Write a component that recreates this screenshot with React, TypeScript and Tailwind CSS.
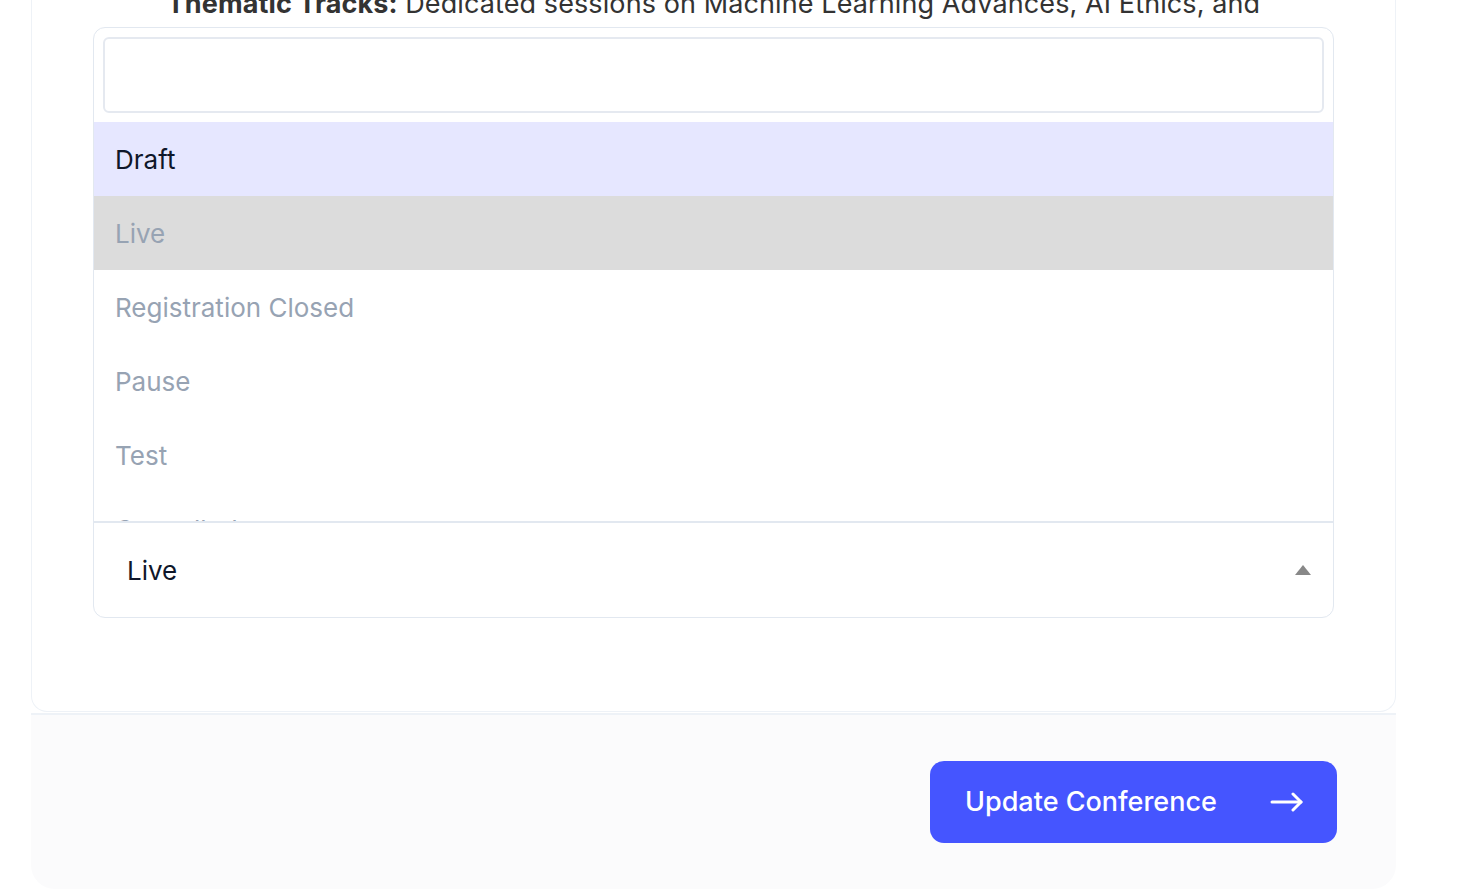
import React from 'react';

const OPTIONS = ['Draft', 'Live', 'Registration Closed', 'Pause', 'Test', 'Cancelled'];

const ArrowIcon: React.FC = () => (
  <svg width="33" height="20" viewBox="0 0 33 20" fill="none" stroke="currentColor" strokeWidth="3" strokeLinecap="round" strokeLinejoin="round">
    <path d="M2 10H31" />
    <path d="M23 2L31 10L23 18" />
  </svg>
);

const App: React.FC = () => {
  const selected = 'Draft';
  const current = 'Live';

  return (
    <div className="min-h-screen bg-white overflow-hidden" style={{ fontFamily: 'Inter, "Noto Sans", sans-serif' }}>
      <div className="ml-[31px] w-[1365px]">
        {/* form card */}
        <div className="bg-white border border-t-0 border-[#eef2f7] rounded-b-2xl px-[61px] pb-[93px]">
          <p className="mt-[-16px] text-center text-[27px] tracking-[0.1px] leading-[40px] text-[#333333] whitespace-nowrap">
            <span className="font-bold">Thematic Tracks:</span> Dedicated sessions on Machine Learning Advances, AI Ethics, and
          </p>

          {/* status select, menu open */}
          <div className="mt-[3px] border border-[#e2e8f0] rounded-xl overflow-hidden bg-white">
            <div className="p-[9px]">
              <input className="block w-full h-[76px] border-2 border-[#e5e9f0] rounded-md outline-none" />
            </div>
            <div className="h-[399px] overflow-hidden">
              {OPTIONS.map((opt) => (
                <div
                  key={opt}
                  className={`h-[74px] flex items-center px-[21px] text-[26px] ${
                    opt === selected
                      ? 'bg-[#e6e7ff] text-[#0f172a]'
                      : opt === current
                      ? 'bg-[#dcdcdc] text-[#97a3b3]'
                      : 'text-[#97a3b3]'
                  }`}
                >
                  {opt}
                </div>
              ))}
            </div>
            <div className="h-[96px] border-t-2 border-[#e2e8f0] flex items-center justify-between pl-[33px] pr-[22px]">
              <span className="text-[26px] text-[#0f172a]">{current}</span>
              <span className="w-0 h-0 border-l-[8px] border-r-[8px] border-b-[10px] border-l-transparent border-r-transparent border-b-[#888888]" />
            </div>
          </div>
        </div>

        {/* footer */}
        <div className="mt-[1px] h-[176px] bg-[#fbfbfc] border-t-2 border-[#eef2f7] rounded-b-3xl flex items-center justify-end pr-[59px]">
          <button className="w-[407px] h-[82px] rounded-[14px] bg-[#4555ff] text-white flex items-center justify-between pl-[35px] pr-[34px]">
            <span className="text-[27px] font-medium">Update Conference</span>
            <ArrowIcon />
          </button>
        </div>
      </div>
    </div>
  );
};

export default App;
